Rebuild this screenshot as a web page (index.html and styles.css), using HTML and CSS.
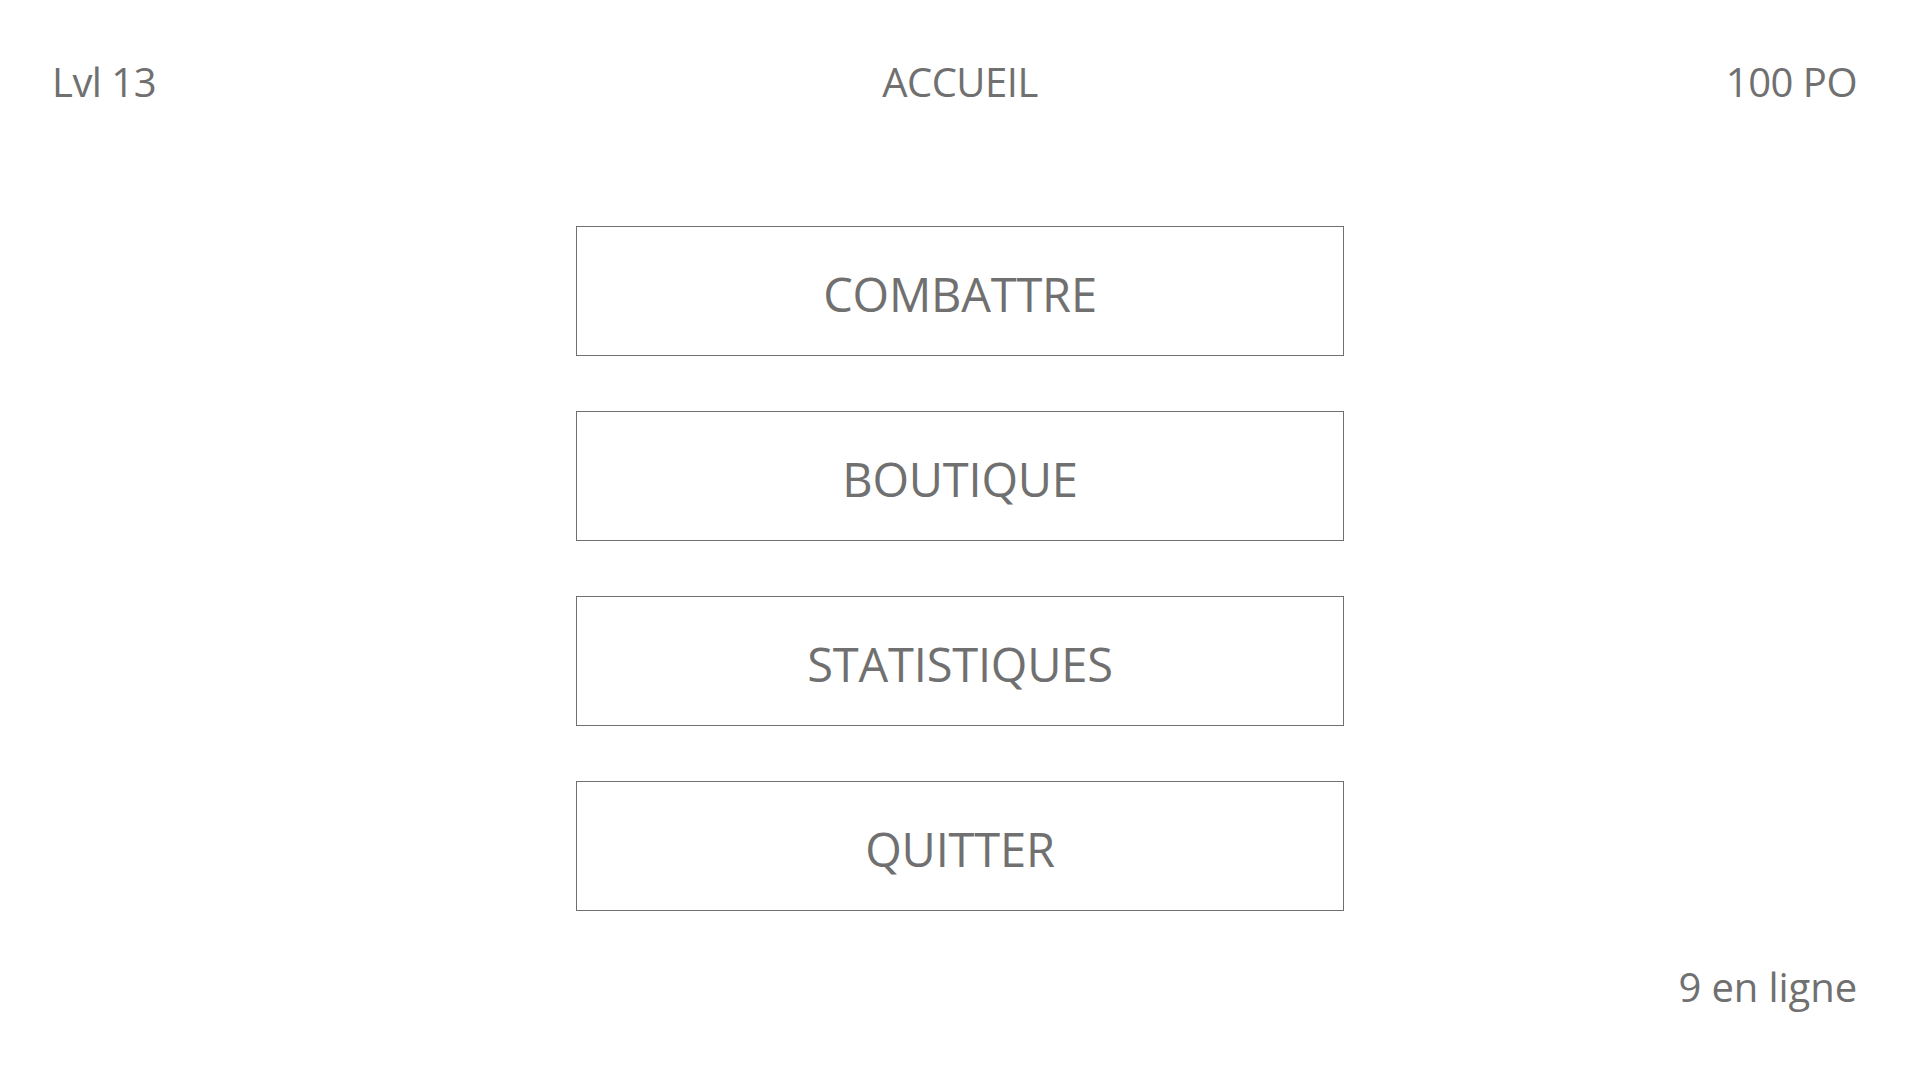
FILE: index.html
```html
<!DOCTYPE html>
<html lang="fr">
<head>
<meta charset="utf-8">
<title>Accueil</title>
<link rel="stylesheet" href="styles.css">
</head>
<body>
<div class="screen">
  <header class="topbar">
    <div class="level">Lvl 13</div>
    <div class="title">ACCUEIL</div>
    <div class="gold">100 PO</div>
  </header>
  <nav class="menu">
    <button class="menu-btn">COMBATTRE</button>
    <button class="menu-btn">BOUTIQUE</button>
    <button class="menu-btn">STATISTIQUES</button>
    <button class="menu-btn">QUITTER</button>
  </nav>
  <footer class="bottombar">
    <div class="online">9 en ligne</div>
  </footer>
</div>
</body>
</html>
```
FILE: styles.css
```css
html, body {
  margin: 0;
  padding: 0;
  background: #ffffff;
}
body {
  font-family: "Open Sans", "Noto Sans", sans-serif;
  color: #707070;
}
.screen {
  width: 1920px;
  height: 1080px;
  display: flex;
  flex-direction: column;
  box-sizing: border-box;
}
.topbar {
  display: grid;
  grid-template-columns: 1fr auto 1fr;
  align-items: center;
  padding: 56px 63px 0 63px;
  font-size: 40px;
  font-weight: 400;
  letter-spacing: -0.5px;
  line-height: 52px;
}
.level { justify-self: start; margin-left: -11px; }
.title { justify-self: center; }
.gold { justify-self: end; }
.menu {
  display: flex;
  flex-direction: column;
  align-items: center;
  gap: 55px;
  margin-top: 118px;
}
.menu-btn {
  width: 768px;
  height: 130px;
  box-sizing: border-box;
  border: 1px solid #707070;
  background: #ffffff;
  color: #707070;
  font-family: "Open Sans", "Noto Sans", sans-serif;
  font-size: 47px;
  font-weight: 400;
  letter-spacing: -0.2px;
  padding: 5px 0 0 0;
  cursor: pointer;
}
.bottombar {
  display: flex;
  justify-content: flex-end;
  padding: 0 63px 0 0;
  margin-top: 46px;
  font-size: 40px;
  font-weight: 400;
  letter-spacing: -0.1px;
  line-height: 60px;
}
```
